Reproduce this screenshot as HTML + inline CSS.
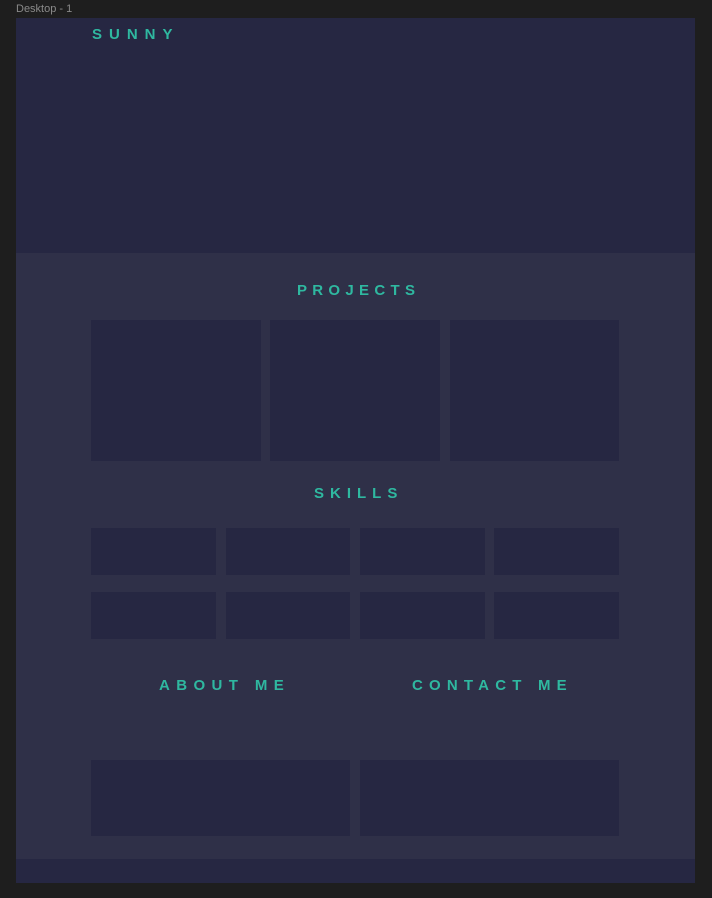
<!DOCTYPE html>
<html><head><style>
body{margin:0;width:712px;height:898px;background:#1e1e1e;position:relative;overflow:hidden;font-family:"Liberation Sans",sans-serif}
.a{position:absolute}
.lbl{position:absolute;top:3px;left:16px;font-size:11px;color:#8a8a8a}
.t{position:absolute;color:#2fb8a0;font-weight:bold;font-size:15px;letter-spacing:5.3px;line-height:16px;white-space:nowrap}
.b{position:absolute;background:#262742}
</style></head><body>
<div class="lbl">Desktop - 1</div>
<div class="a" style="left:16px;top:18px;width:679px;height:865px;background:#2f3048"></div>
<div class="a" style="left:16px;top:18px;width:679px;height:235px;background:#262742"></div>
<div class="a" style="left:16px;top:859px;width:679px;height:24px;background:#262742"></div>
<div class="t" style="left:92px;top:27px;letter-spacing:7px">SUNNY</div>
<div class="t" style="left:297px;top:283px">PROJECTS</div>
<div class="b" style="left:91px;top:320px;width:170px;height:141px"></div>
<div class="b" style="left:270px;top:320px;width:170px;height:141px"></div>
<div class="b" style="left:450px;top:320px;width:169px;height:141px"></div>
<div class="t" style="left:314px;top:486px;letter-spacing:6px">SKILLS</div>
<div class="b" style="left:91px;top:528px;width:125px;height:47px"></div>
<div class="b" style="left:226px;top:528px;width:124px;height:47px"></div>
<div class="b" style="left:360px;top:528px;width:125px;height:47px"></div>
<div class="b" style="left:494px;top:528px;width:125px;height:47px"></div>
<div class="b" style="left:91px;top:592px;width:125px;height:47px"></div>
<div class="b" style="left:226px;top:592px;width:124px;height:47px"></div>
<div class="b" style="left:360px;top:592px;width:125px;height:47px"></div>
<div class="b" style="left:494px;top:592px;width:125px;height:47px"></div>
<div class="t" style="left:159px;top:678px;letter-spacing:6.4px">ABOUT ME</div>
<div class="t" style="left:412px;top:678px;letter-spacing:6.2px">CONTACT ME</div>
<div class="b" style="left:91px;top:760px;width:259px;height:76px"></div>
<div class="b" style="left:360px;top:760px;width:259px;height:76px"></div>
</body></html>
